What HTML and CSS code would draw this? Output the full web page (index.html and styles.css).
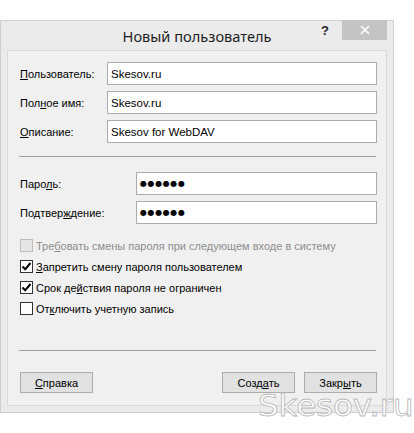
FILE: index.html
```html
<!DOCTYPE html>
<html lang="ru">
<head>
<meta charset="utf-8">
<title>Новый пользователь</title>
<link rel="stylesheet" href="styles.css">
</head>
<body>
<div class="window">
  <div class="titlebar">
    <div class="title">Новый пользователь</div>
    <div class="help">?</div>
    <div class="close"><svg width="10" height="10" viewBox="0 0 10 10"><path d="M1 1L9 9M9 1L1 9" stroke="#fff" stroke-width="1.6"/></svg></div>
  </div>
  <div class="client">
    <div class="form form-top">
      <label class="lbl"><u>П</u>ользователь:</label>
      <div class="field">Skesov.ru</div>
      <label class="lbl">Пол<u>н</u>ое имя:</label>
      <div class="field">Skesov.ru</div>
      <label class="lbl"><u>О</u>писание:</label>
      <div class="field">Skesov for WebDAV</div>
    </div>
    <div class="sep"></div>
    <div class="form form-pass">
      <label class="lbl">Паро<u>л</u>ь:</label>
      <div class="field dots">●●●●●●</div>
      <label class="lbl">Подтвер<u>ж</u>дение:</label>
      <div class="field dots">●●●●●●</div>
    </div>
    <div class="checks">
      <div class="chk disabled"><span class="box"></span><span>Тре<u>б</u>овать смены пароля при следующем входе в систему</span></div>
      <div class="chk"><span class="box"><svg width="11" height="11" viewBox="0 0 11 11"><path d="M1.5 5.5L4.2 8.3L9.5 2" fill="none" stroke="#000" stroke-width="2"/></svg></span><span><u>З</u>апретить смену пароля пользователем</span></div>
      <div class="chk"><span class="box"><svg width="11" height="11" viewBox="0 0 11 11"><path d="M1.5 5.5L4.2 8.3L9.5 2" fill="none" stroke="#000" stroke-width="2"/></svg></span><span>Срок де<u>й</u>ствия пароля не ограничен</span></div>
      <div class="chk"><span class="box"></span><span>От<u>к</u>лючить учетную запись</span></div>
    </div>
    <div class="spacer"></div>
    <div class="sep sep2"></div>
    <div class="buttons">
      <button class="btn"><u>С</u>правка</button>
      <div class="right">
        <button class="btn">Созд<u>а</u>ть</button>
        <button class="btn">Закр<u>ы</u>ть</button>
      </div>
    </div>
  </div>
</div>
<div class="watermark">Skesov.ru</div>
</body>
</html>
```
FILE: styles.css
```css
* { box-sizing: border-box; }
html, body { margin: 0; padding: 0; background: #fff; }
body {
  width: 414px; height: 433px; position: relative; overflow: hidden;
  font-family: "Liberation Sans", Arial, sans-serif; font-size: 11px; color: #000;
}
u { text-decoration: underline; text-underline-offset: 1px; }
.window {
  margin-top: 20px;
  width: 394px; height: 393px;
  background: #ebebeb;
  border: 1px solid #cfcfcf;
  padding: 0 6px 6px 6px;
  display: flex; flex-direction: column;
}
.titlebar {
  height: 29px; position: relative;
  display: flex; align-items: center; justify-content: center;
}
.title {
  font-family: "Noto Sans", "Open Sans", sans-serif;
  font-size: 14.6px; color: #1e1e1e; margin-top: 1px;
}
.help {
  position: absolute; right: 58px; top: 2px;
  font-family: "Liberation Sans", sans-serif; font-weight: bold; font-size: 13px; color: #222;
}
.close {
  position: absolute; right: 0; top: -1px; width: 45px; height: 20px;
  background: #c4c4c4; display: flex; align-items: center; justify-content: center;
}
.client {
  flex: 1;
  background: #f0f0f0;
  border: 1px solid #dadada;
  padding: 11px 9px 12px 12px;
  display: flex; flex-direction: column;
}
.form {
  display: grid; row-gap: 6px; align-items: center;
}
.form-top { grid-template-columns: 87px 270px; }
.form-pass { grid-template-columns: 116px 241px; margin-top: 15px; }
.lbl { color: #000; }
.field {
  height: 23px; background: #fff; border: 1px solid #ababab;
  padding: 0 3px; display: flex; align-items: center; font-size: 11.5px;
}
.dots { font-family: "DejaVu Sans", sans-serif; font-size: 8px; letter-spacing: 0.6px; padding-left: 3px; }
.sep { height: 1px; background: #a0a0a0; margin: 13px 1px 0 -1px; }
.checks { margin-top: 11px; display: flex; flex-direction: column; }
.chk { height: 21px; display: flex; align-items: center; gap: 3px; }
.box {
  width: 13px; height: 13px; background: #fff; border: 1px solid #333;
  display: flex; align-items: center; justify-content: center;
}
.disabled { color: #8d8d8d; }
.disabled .box { background: #e6e6e6; border-color: #bcbcbc; }
.spacer { flex: 1; }
.sep2 { margin-top: 0; }
.buttons {
  margin-top: 21px; display: flex; justify-content: space-between; padding-right: 0;
}
.right { display: flex; gap: 9px; }
.btn {
  width: 73px; height: 21px; background: #e1e1e1; border: 1px solid #adadad;
  font-family: "Liberation Sans", Arial, sans-serif; font-size: 11px; color: #000;
  padding: 0; margin: 0;
}
.watermark {
  position: absolute; left: 258px; top: 394px;
  font-family: "DejaVu Sans", sans-serif; font-size: 30px; line-height: 24px;
  color: #fff; -webkit-text-stroke: 0.8px #b8b8b8;
  transform: scaleX(1.08); transform-origin: left top;
}
```
